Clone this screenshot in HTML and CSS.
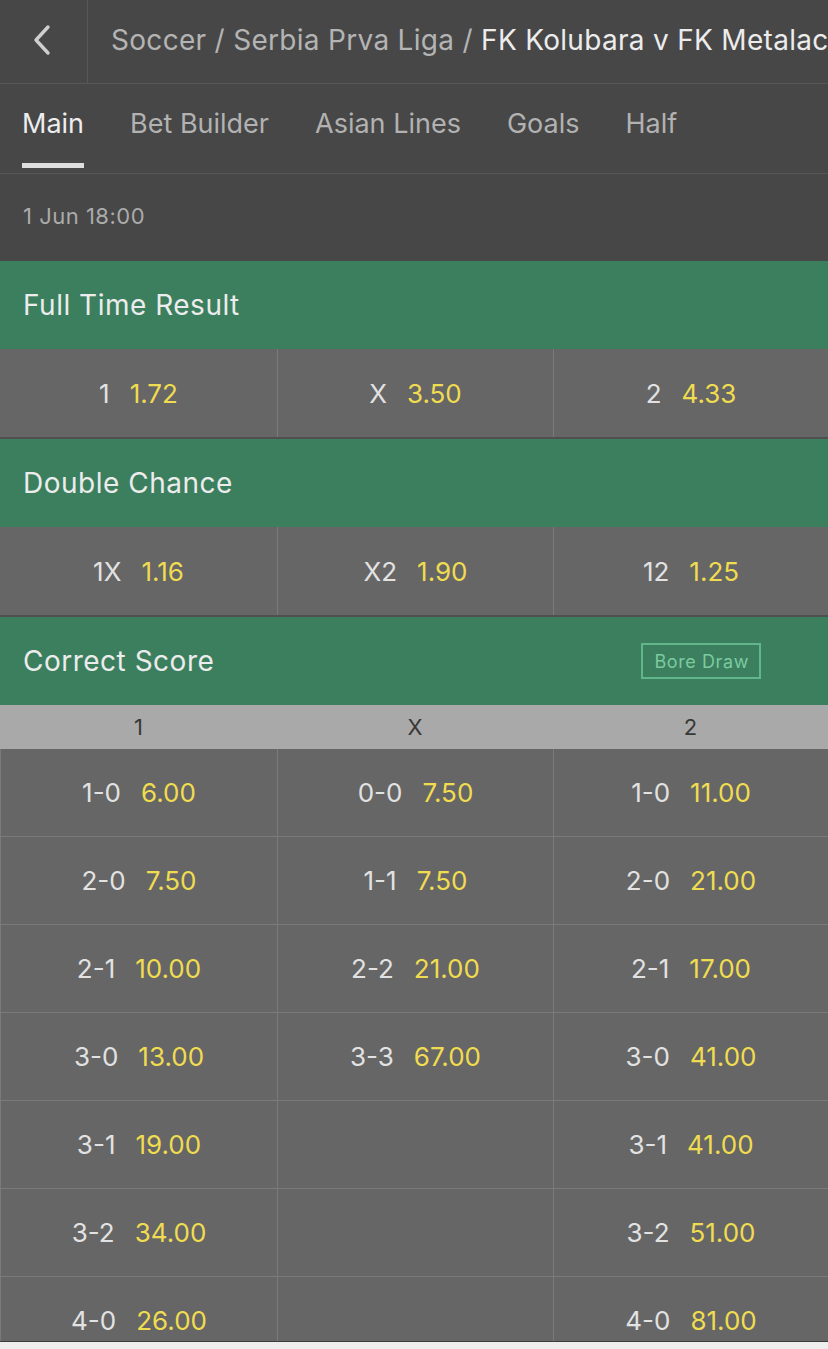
FILE: index.html
```html
<!DOCTYPE html>
<html>
<head>
<meta charset="utf-8">
<link rel="stylesheet" href="styles.css">
</head>
<body>
<div class="topbar">
  <div class="back">
    <svg width="20" height="32" viewBox="0 0 20 32"><polyline points="15,3 3,16 15,29" fill="none" stroke="#cfcfcf" stroke-width="3.4" stroke-linecap="round" stroke-linejoin="round"/></svg>
  </div>
  <div class="crumbs"><span class="crumb-muted">Soccer / Serbia Prva Liga / </span><span class="crumb-current">FK Kolubara v FK Metalac</span></div>
</div>
<div class="tabs">
  <div class="tab active">Main</div>
  <div class="tab">Bet Builder</div>
  <div class="tab">Asian Lines</div>
  <div class="tab">Goals</div>
  <div class="tab">Half</div>
</div>
<div class="date">1 Jun 18:00</div>

<div class="market-head">Full Time Result</div>
<div class="odds-row">
  <div class="cell"><span class="lbl">1</span><span class="odd">1.72</span></div>
  <div class="cell"><span class="lbl">X</span><span class="odd">3.50</span></div>
  <div class="cell"><span class="lbl">2</span><span class="odd">4.33</span></div>
</div>

<div class="market-head">Double Chance</div>
<div class="odds-row">
  <div class="cell"><span class="lbl">1X</span><span class="odd">1.16</span></div>
  <div class="cell"><span class="lbl">X2</span><span class="odd">1.90</span></div>
  <div class="cell"><span class="lbl">12</span><span class="odd">1.25</span></div>
</div>

<div class="market-head"><span>Correct Score</span><span class="bore">Bore Draw</span></div>
<div class="col-head"><div>1</div><div>X</div><div>2</div></div>
<div class="score-grid">
  <div class="cell"><span class="lbl">1-0</span><span class="odd">6.00</span></div>
  <div class="cell"><span class="lbl">0-0</span><span class="odd">7.50</span></div>
  <div class="cell"><span class="lbl">1-0</span><span class="odd">11.00</span></div>

  <div class="cell"><span class="lbl">2-0</span><span class="odd">7.50</span></div>
  <div class="cell"><span class="lbl">1-1</span><span class="odd">7.50</span></div>
  <div class="cell"><span class="lbl">2-0</span><span class="odd">21.00</span></div>

  <div class="cell"><span class="lbl">2-1</span><span class="odd">10.00</span></div>
  <div class="cell"><span class="lbl">2-2</span><span class="odd">21.00</span></div>
  <div class="cell"><span class="lbl">2-1</span><span class="odd">17.00</span></div>

  <div class="cell"><span class="lbl">3-0</span><span class="odd">13.00</span></div>
  <div class="cell"><span class="lbl">3-3</span><span class="odd">67.00</span></div>
  <div class="cell"><span class="lbl">3-0</span><span class="odd">41.00</span></div>

  <div class="cell"><span class="lbl">3-1</span><span class="odd">19.00</span></div>
  <div class="cell"></div>
  <div class="cell"><span class="lbl">3-1</span><span class="odd">41.00</span></div>

  <div class="cell"><span class="lbl">3-2</span><span class="odd">34.00</span></div>
  <div class="cell"></div>
  <div class="cell"><span class="lbl">3-2</span><span class="odd">51.00</span></div>

  <div class="cell"><span class="lbl">4-0</span><span class="odd">26.00</span></div>
  <div class="cell"></div>
  <div class="cell"><span class="lbl">4-0</span><span class="odd">81.00</span></div>
</div>
<div class="bottom-strip"></div>
</body>
</html>
```

FILE: styles.css
```css
* { box-sizing: border-box; }
html, body {
  margin: 0;
  padding: 0;
  background: #474747;
  font-family: Inter, "Liberation Sans", sans-serif;
  overflow: hidden;
}
body { width: 828px; height: 1349px; }

.topbar {
  display: flex;
  height: 84px;
  border-bottom: 1px solid #575757;
}
.back {
  width: 88px;
  flex: none;
  border-right: 1px solid #575757;
  display: flex;
  align-items: center;
  justify-content: center;
  padding-right: 2px;
  padding-bottom: 3px;
}
.crumbs {
  flex: 1;
  padding-left: 23px;
  display: flex;
  align-items: center;
  white-space: nowrap;
  overflow: hidden;
  font-size: 28px;
  letter-spacing: 0.3px;
  padding-bottom: 3px;
}
.crumb-muted { color: #b4b4b4; white-space: pre; }
.crumb-current { color: #ececec; }

.tabs {
  display: flex;
  gap: 46px;
  padding: 0 22px;
  height: 90px;
  border-bottom: 1px solid #575757;
}
.tab {
  height: 84px;
  display: flex;
  align-items: center;
  font-size: 27px;
  color: #b2b2b2;
  border-bottom: 5px solid transparent;
  letter-spacing: 0;
}
.tab.active {
  color: #ededed;
  border-bottom-color: #dedede;
}

.date {
  height: 87px;
  display: flex;
  align-items: center;
  padding: 0 23px 4px;
  font-size: 22px;
  letter-spacing: 0.5px;
  color: #ababab;
}

.market-head {
  height: 88px;
  background: #3b7f5e;
  display: flex;
  align-items: center;
  justify-content: space-between;
  padding: 0 67px 0 23px;
  font-size: 28px;
  color: #ececec;
  letter-spacing: 0.5px;
}
.bore {
  border: 2px solid #62b68b;
  color: #7ccaa0;
  font-size: 18px;
  height: 36px;
  padding: 0 10px 0 11px;
  display: flex;
  align-items: center;
  letter-spacing: 0.6px;
}

.odds-row {
  display: grid;
  grid-template-columns: 277px 276px 275px;
  height: 90px;
  background: #666666;
  border-bottom: 2px solid #505050;
}
.cell {
  display: flex;
  align-items: center;
  justify-content: center;
  gap: 20px;
  font-size: 26px;
}
.odds-row .cell + .cell { border-left: 1px solid #7a7a7a; }
.lbl { color: #e2e2e2; }
.odd { color: #f0dc50; }

.col-head {
  display: grid;
  grid-template-columns: 277px 276px 275px;
  height: 44px;
  background: #a9a9a9;
  color: #383838;
  font-size: 22px;
}
.col-head div {
  display: flex;
  align-items: center;
  justify-content: center;
}

.score-grid {
  display: grid;
  grid-template-columns: 277px 276px 275px;
  grid-auto-rows: 88px;
  background: #666666;
}
.score-grid .cell {
  border-left: 1px solid #7a7a7a;
  border-bottom: 1px solid #7a7a7a;
}

.bottom-strip {
  position: fixed;
  left: 0;
  right: 0;
  bottom: 0;
  height: 8px;
  background: #eeeeee;
  border-top: 1px solid #3c3c3c;
}
```
